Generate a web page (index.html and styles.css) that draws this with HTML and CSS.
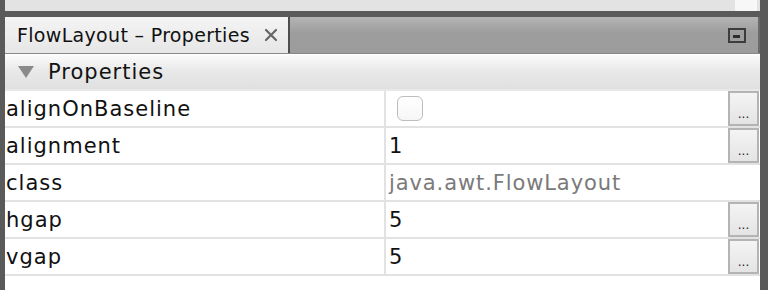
FILE: index.html
```html
<!DOCTYPE html>
<html lang="en">
<head>
    <meta charset="UTF-8">
    <title>FlowLayout - Properties</title>
    <link rel="stylesheet" href="styles.css">
</head>
<body>
    <div class="window">
        <!-- Strip of the editor above -->
        <div class="top-strip"><div class="top-patch"></div></div>

        <div class="panel">
            <!-- Tab bar -->
            <div class="tabbar">
                <div class="tab">
                    <span class="tab-title">FlowLayout – Properties</span>
                    <svg class="tab-close" width="14" height="14" viewBox="0 0 14 14">
                        <path d="M2 2 L12 12 M12 2 L2 12" stroke="#666" stroke-width="2.2" stroke-linecap="round"/>
                    </svg>
                </div>
                <div class="tab-rest">
                    <div class="minimize"><div class="minimize-bar"></div></div>
                </div>
            </div>

            <!-- Properties sheet -->
            <div class="section-head">
                <span class="triangle"></span>
                <span class="section-title">Properties</span>
            </div>

            <div class="sheet">
                <div class="row">
                    <div class="name">alignOnBaseline</div>
                    <div class="value"><span class="checkbox"></span></div>
                    <div class="more"><button class="dots">...</button></div>
                </div>
                <div class="row">
                    <div class="name">alignment</div>
                    <div class="value">1</div>
                    <div class="more"><button class="dots">...</button></div>
                </div>
                <div class="row">
                    <div class="name">class</div>
                    <div class="value readonly">java.awt.FlowLayout</div>
                    <div class="more"></div>
                </div>
                <div class="row">
                    <div class="name">hgap</div>
                    <div class="value">5</div>
                    <div class="more"><button class="dots">...</button></div>
                </div>
                <div class="row">
                    <div class="name">vgap</div>
                    <div class="value">5</div>
                    <div class="more"><button class="dots">...</button></div>
                </div>
            </div>
        </div>
    </div>
</body>
</html>
```

FILE: styles.css
```css
body {
    margin: 0;
    font-family: "DejaVu Sans", Verdana, sans-serif;
    background-color: #5a5a5a;
    color: #111;
}

.window {
    width: 768px;
    height: 290px;
    overflow: hidden;
    border-left: 5px solid #5a5a5a;
    box-sizing: border-box;
}

/* Editor strip at the top */
.top-strip {
    height: 11px;
    background-color: #e3e3e3;
    margin-right: 8px;
    display: flex;
    justify-content: flex-end;
}
.top-patch {
    width: 22px;
    margin-right: 3px;
    background-color: #f7f7f7;
}

.panel {
    margin-top: 6px;
    margin-right: 8px;
    background-color: #fff;
    height: 273px;
}

/* Tab bar */
.tabbar {
    display: flex;
    height: 37px;
    box-sizing: border-box;
    border-bottom: 1px solid #888;
}
.tab {
    width: 285px;
    display: flex;
    align-items: center;
    padding-left: 12px;
    box-sizing: border-box;
    background: linear-gradient(#f4f4f4, #e6e6e6);
    border-right: 2px solid #4e4e4e;
}
.tab-title {
    font-size: 19px;
    letter-spacing: 0.32px;
}
.tab-close {
    margin-left: 14px;
}
.tab-rest {
    flex: 1;
    display: flex;
    justify-content: flex-end;
    align-items: center;
    padding-right: 12px;
    background: linear-gradient(#b4b4b4, #9d9d9d 45%, #9c9c9c);
    border-right: 2px solid #6a6a6a;
}
.minimize {
    width: 18px;
    height: 15px;
    box-sizing: border-box;
    border: 2px solid #3c3c3c;
    display: flex;
    align-items: flex-end;
    padding: 0 0 3px 3px;
}
.minimize-bar {
    width: 7px;
    height: 3px;
    background-color: #2e2e2e;
}

/* Section header */
.section-head {
    height: 36px;
    margin-top: 1px;
    display: flex;
    align-items: center;
    background: linear-gradient(#fbfbfb, #e9e9e9 45%, #e0e0e0);
    border-bottom: 2px solid #e8e8e8;
    box-sizing: border-box;
}
.triangle {
    width: 0;
    height: 0;
    margin-left: 13px;
    border-left: 8px solid transparent;
    border-right: 8px solid transparent;
    border-top: 12px solid #8a8a8a;
}
.section-title {
    margin-left: 14px;
    font-size: 21px;
    letter-spacing: 1px;
}

/* Rows */
.row {
    display: flex;
    height: 37px;
    box-sizing: border-box;
    border-bottom: 2px solid #e2e2e2;
}
.name {
    width: 378px;
    padding-left: 1px;
    display: flex;
    align-items: center;
    font-size: 21px;
    letter-spacing: 1px;
    border-right: 2px solid #e2e2e2;
}
.value {
    flex: 1;
    display: flex;
    align-items: center;
    padding-left: 3px;
    font-size: 21px;
    letter-spacing: 0.9px;
}
.readonly {
    color: #7a7a7a;
}
.checkbox {
    width: 26px;
    height: 25px;
    margin-left: 8px;
    box-sizing: border-box;
    border: 1px solid #bdbdbd;
    border-radius: 6px;
    background: linear-gradient(#ffffff, #f6f6f6);
}
.more {
    width: 32px;
    display: flex;
    align-items: center;
}
.dots {
    width: 31px;
    height: 35px;
    padding: 0 0 3px;
    margin-top: 0;
    box-sizing: border-box;
    border: 2px solid #b4b4b4;
    background: linear-gradient(#f4f4f4, #e4e4e4);
    font-family: "DejaVu Sans", sans-serif;
    font-size: 12px;
    color: #222;
    display: flex;
    align-items: flex-end;
    justify-content: center;
}
```
